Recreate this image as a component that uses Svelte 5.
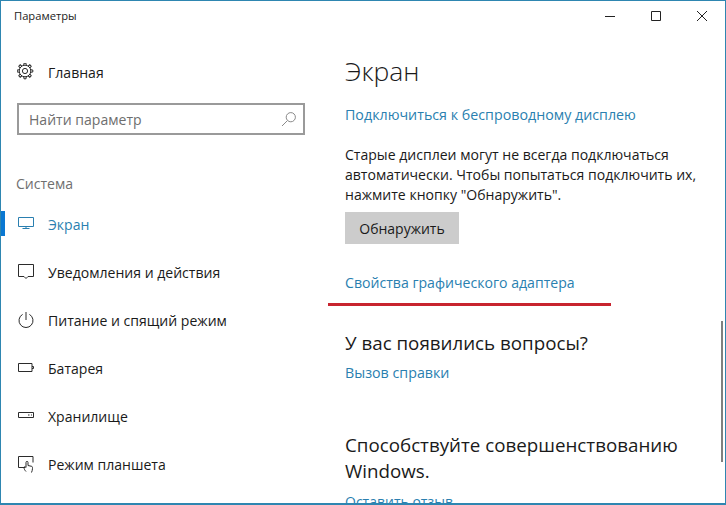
<script lang="ts">
	const items = [
		{ label: 'Экран', icon: 'display', active: true },
		{ label: 'Уведомления и действия', icon: 'notify' },
		{ label: 'Питание и спящий режим', icon: 'power' },
		{ label: 'Батарея', icon: 'battery' },
		{ label: 'Хранилище', icon: 'storage' },
		{ label: 'Режим планшета', icon: 'tablet' }
	];

	const gearTeeth = [0, 45, 90, 135, 180, 225, 270, 315];
</script>

<div class="window">
	<header class="titlebar">
		<span class="title">Параметры</span>
		<div class="controls">
			<svg width="12" height="12" viewBox="0 0 12 12"><path d="M1 6.5h10" /></svg>
			<svg width="12" height="12" viewBox="0 0 12 12"><path d="M1.5 1.5h9v9h-9z" /></svg>
			<svg width="12" height="12" viewBox="0 0 12 12"><path d="M1 1l10 10M11 1L1 11" /></svg>
		</div>
	</header>

	<div class="body">
		<aside class="sidebar">
			<div class="home">
				<svg class="icon" width="18" height="18" viewBox="0 0 18 18">
					<g transform="translate(-1 -1)">
						<circle cx="9" cy="9" r="2.600" />
						<circle cx="9" cy="9" r="5.800" />
						{#each gearTeeth as a}
							<path d="M7.700 3.400 L8 1.200 H10 L10.300 3.400" transform="rotate({a} 9 9)" />
						{/each}
					</g>
				</svg>
				<span>Главная</span>
			</div>

			<div class="search">
				<span>Найти параметр</span>
				<svg width="16" height="16" viewBox="0 0 16 16">
					<circle cx="9.800" cy="6.200" r="4.600" />
					<path d="M6.400 9.600L1 15" />
				</svg>
			</div>

			<div class="group">Система</div>

			<nav>
				{#each items as item}
					<div class="item" class:active={item.active}>
						<svg class="icon" width="18" height="18" viewBox="0 0 18 18">
							{#if item.icon === 'display'}
								<path d="M1.500 2.500h15v9h-15zM9 11.500v2M5.500 13.500h7" />
							{:else if item.icon === 'notify'}
								<path d="M1.500 1.500h15v12h-5.500l-2 2-2-2h-5.500z" />
							{:else if item.icon === 'power'}
								<path d="M5.600 3.400a7 7 0 1 0 6.800 0M9 1v8" />
							{:else if item.icon === 'battery'}
								<path d="M1.500 4.500h13.500v8h-13.500z" />
								<path d="M15 7.500h1.500v2h-1.500" />
							{:else if item.icon === 'storage'}
								<path d="M1.500 5.500h15v5h-15zM11 8h1.500M14 8h1" />
							{:else}
								<g transform="translate(0 -1)">
									<path d="M8 13.500h-6.500v-11h14.500v6" />
									<path d="M9 17.500c-1-1-2-2.500-2-4 0-1 1-1 2 0v-5c0-1.600 2-1.600 2 0v3l3.500.8c1 .2 1 1 1 2 0 1.500-.5 3-1 4.200" />
								</g>
							{/if}
						</svg>
						<span>{item.label}</span>
					</div>
				{/each}
			</nav>
		</aside>

		<main class="content">
			<h1>Экран</h1>
			<a class="first">Подключиться к беспроводному дисплею</a>
			<p>Старые дисплеи могут не всегда подключаться автоматически. Чтобы попытаться подключить их, нажмите кнопку "Обнаружить".</p>
			<button>Обнаружить</button>
			<a class="adapter">Свойства графического адаптера</a>
			<h2 class="questions">У вас появились вопросы?</h2>
			<a>Вызов справки</a>
			<h2 class="improve">Способствуйте совершенствованию Windows.</h2>
			<a class="feedback">Оставить отзыв</a>
		</main>
	</div>

	<div class="red-line"></div>
	<div class="scrollbar"></div>
</div>

<style>
	:global(body) {
		margin: 0;
		background: #fff;
	}

	.window {
		position: relative;
		box-sizing: border-box;
		width: 726px;
		height: 505px;
		border: 1px solid #2e86b1;
		border-bottom-width: 2px;
		background: #fff;
		overflow: hidden;
		font-family: 'Open Sans', 'Noto Sans', sans-serif;
		font-size: 14.25px;
		color: #1a1a1a;
	}

	.titlebar {
		display: flex;
		align-items: center;
		justify-content: space-between;
		height: 29px;
		padding-left: 13px;
	}

	.title {
		font-size: 11.2px;
		color: #222;
	}

	.controls {
		display: flex;
		gap: 34px;
		padding-right: 17px;
	}

	.controls svg {
		display: block;
		fill: none;
		stroke: #222;
		stroke-width: 1;
	}

	.body {
		display: grid;
		grid-template-columns: 344px 1fr;
	}

	.sidebar {
		padding-top: 27px;
		font-size: 14.05px;
	}

	.icon {
		flex: none;
		fill: none;
		stroke: #2b2b2b;
		stroke-width: 1;
	}

	.home {
		display: flex;
		align-items: center;
		gap: 13px;
		height: 30px;
		padding-left: 16px;
	}

	.search {
		display: flex;
		align-items: center;
		justify-content: space-between;
		box-sizing: border-box;
		width: 288px;
		height: 32px;
		margin: 16px 0 0 16px;
		padding: 0 6px 0 10px;
		border: 2px solid #9a9a9a;
		color: #6e6e6e;
	}

	.search svg {
		fill: none;
		stroke: #8a8a8a;
		stroke-width: 1;
	}

	.group {
		margin: 37px 0 0 15px;
		height: 24px;
		line-height: 24px;
		color: #6f6f6f;
	}

	nav {
		margin-top: 4px;
	}

	.item {
		position: relative;
		display: flex;
		align-items: center;
		gap: 13px;
		height: 48px;
		padding-left: 16px;
	}

	.item.active {
		color: #2a7fb0;
	}

	.item.active .icon {
		stroke: #2a7fb0;
	}

	.item.active::before {
		content: '';
		position: absolute;
		left: 0;
		top: 11px;
		width: 4px;
		height: 25px;
		background: #0a78d2;
	}

	.content {
		padding-top: 21px;
		width: 356px;
	}

	h1 {
		margin: 0;
		font-size: 26.5px;
		font-weight: 300;
		line-height: 40px;
	}

	h2 {
		margin: 0;
		font-size: 18.75px;
		font-weight: 400;
		line-height: 26px;
	}

	a {
		display: block;
		color: #2a7fb0;
		line-height: 20px;
		white-space: nowrap;
	}

	.first {
		margin-top: 14px;
	}

	p {
		margin: 20px 0 0;
		font-size: 14.05px;
		line-height: 20px;
	}

	button {
		display: block;
		width: 114px;
		height: 32px;
		margin-top: 7px;
		border: 0;
		padding: 0;
		background: #cccccc;
		color: #1a1a1a;
		font: inherit;
		font-size: 14px;
	}

	.adapter {
		margin-top: 29px;
		font-size: 14.1px;
	}

	.questions {
		margin-top: 37px;
		margin-bottom: 7px;
	}

	.improve {
		margin-top: 49px;
		margin-bottom: 8px;
	}

	.feedback {
		font-size: 14px;
	}

	.red-line {
		position: absolute;
		left: 327px;
		top: 302px;
		width: 283px;
		height: 3px;
		background: #c8242f;
	}

	.scrollbar {
		position: absolute;
		right: 2px;
		top: 320px;
		width: 2px;
		height: 141px;
		background: #7f7f7f;
	}
</style>
